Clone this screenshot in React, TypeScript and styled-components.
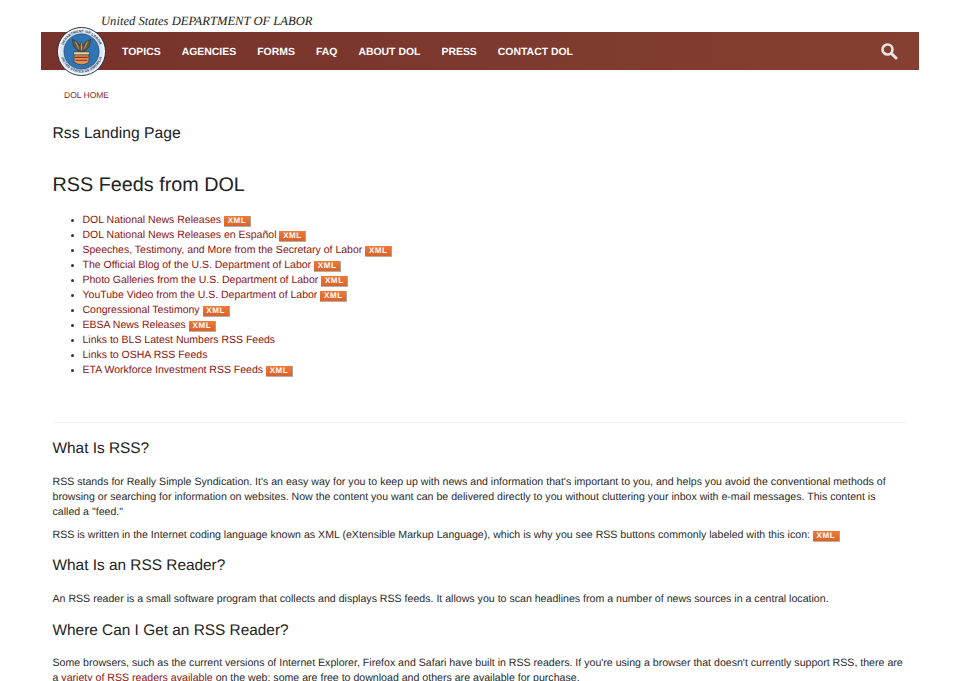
import React from "react";
import styled, { createGlobalStyle } from "styled-components";

const Global = createGlobalStyle`
  html, body { margin: 0; padding: 0; background: #fff; overflow: hidden; height: 681px; }
  body {
    font-family: "Liberation Sans", Arial, sans-serif;
    color: #2a2a2a;
    font-size: 10.6px;
    text-rendering: geometricPrecision;
  }
`;
const Page = styled.div`
  width: 878px;
  margin: 0 0 0 41px;
  height: 681px;
  overflow: hidden;
`;
const Header = styled.header`position: relative; padding-top: 14px;`;
const Agency = styled.div`
  font-family: "Liberation Serif", serif;
  font-style: italic;
  font-size: 12.6px;
  line-height: 14px;
  height: 18px;
  padding-left: 60px;
  color: #222;
`;
const Bar = styled.nav`
  height: 38px;
  background: linear-gradient(90deg, #77322b, #854031);
  display: flex;
  align-items: center;
  padding: 0 21px 0 81px;
`;
const Seal = styled.svg`position: absolute; left: 15.5px; top: 26.5px;`;
const NavItem = styled.a`
  color: #fff;
  font-weight: 700;
  font-size: 10.45px;
  margin-right: 21px;
  padding-top: 2px;
  white-space: nowrap;
`;
const Search = styled.svg`margin-left: auto;`;
const Crumb = styled.div`
  color: #7a2a22;
  font-size: 8.5px;
  padding: 20px 0 0 23px;
  line-height: 10px;
`;
const Main = styled.main`padding: 0 12px 0 11.5px;`;
const PageTitle = styled.h1`
  font-weight: 400;
  font-size: 15.7px;
  line-height: 18px;
  margin: 25px 0 0;
  color: #222;
`;
const H2 = styled.h2`
  font-weight: 400;
  font-size: 19.8px;
  line-height: 22px;
  margin: 31px 0 0;
  color: #222;
`;
const Feeds = styled.ul`
  margin: 17px 0 0;
  padding: 0 0 0 30px;
  list-style: disc;
  li { line-height: 15px; height: 15px; font-size: 10.5px; }
  li::marker { font-size: 9px; color: #333; }
`;
const Link = styled.a`color: #8b1410;`;
const Xml = styled.span<{ $gap: number }>`
  display: inline-block;
  vertical-align: baseline;
  margin-left: ${p => p.$gap}px;
  width: 27px;
  height: 11px;
  background: linear-gradient(180deg, #ee7a38, #d9622a);
  border-right: 1px solid #a9a49a;
  border-bottom: 1px solid #b5b0a6;
  box-sizing: border-box;
  color: #fff;
  font-weight: 700;
  font-size: 8px;
  line-height: 10px;
  letter-spacing: 0.6px;
  text-align: center;
`;
const Rule = styled.hr`
  border: 0;
  border-top: 1px solid #f0f0f0;
  margin: 44px 0 0;
`;
const H3 = styled.h3<{ $top: number }>`
  font-weight: 400;
  font-size: 15.4px;
  line-height: 18px;
  margin: ${p => p.$top}px 0 0;
  color: #222;
`;
const Para = styled.p<{ $top: number }>`
  width: 853px;
  margin: ${p => p.$top}px 0 0;
  line-height: 15px;
  font-size: 10.6px;
  color: #2a2a2a;
`;
const SealText = styled.text`
  font-size: 3.6px;
  font-weight: 700;
  fill: #1c3a66;
  letter-spacing: 0.15px;
`;

const items: [string, boolean][] = [
  ["DOL National News Releases", true],
  ["DOL National News Releases en Español", true],
  ["Speeches, Testimony, and More from the Secretary of Labor", true],
  ["The Official Blog of the U.S. Department of Labor", true],
  ["Photo Galleries from the U.S. Department of Labor", true],
  ["YouTube Video from the U.S. Department of Labor", true],
  ["Congressional Testimony", true],
  ["EBSA News Releases", true],
  ["Links to BLS Latest Numbers RSS Feeds", false],
  ["Links to OSHA RSS Feeds", false],
  ["ETA Workforce Investment RSS Feeds", true],
];
const nav = ["TOPICS", "AGENCIES", "FORMS", "FAQ", "ABOUT DOL", "PRESS", "CONTACT DOL"];

export default function App() {
  return (
    <Page>
      <Global />
      <Header>
        <Agency>United States DEPARTMENT OF LABOR</Agency>
        <Bar>
          {nav.map(n => <NavItem key={n}>{n}</NavItem>)}
          <Search width="18" height="18" viewBox="0 0 18 18" fill="none" stroke="#e4e4df">
            <circle cx="7.5" cy="7.5" r="5" strokeWidth="2.6" />
            <path d="M11.5 11.5 L16 16" strokeWidth="3" strokeLinecap="round" />
          </Search>
        </Bar>
        <Seal width="49" height="49" viewBox="0 0 50 50">
          <defs>
            <path id="ring-top" d="M5.5 25 A19.5 19.5 0 0 1 44.5 25" />
            <path id="ring-bottom" d="M3.5 25 A21.5 21.5 0 0 0 46.5 25" />
          </defs>
          <circle cx="25" cy="25" r="24.5" fill="#fff" stroke="#1c2c40" strokeWidth="1" />
          <circle cx="25" cy="25" r="22.6" fill="#dfe6ee" />
          <SealText><textPath href="#ring-top" startOffset="50%" textAnchor="middle">DEPARTMENT OF LABOR</textPath></SealText>
          <SealText><textPath href="#ring-bottom" startOffset="50%" textAnchor="middle">UNITED STATES OF AMERICA</textPath></SealText>
          <circle cx="25" cy="25" r="18" fill="#2f74b4" stroke="#16386a" strokeWidth="0.6" />
          <path d="M15.5 12.5 L21 15.5 L23 19 L25 15 L27 19 L29 15.5 L34.5 12.5 L33 20 L28.5 24.5 L21.5 24.5 L17 20 Z" fill="#6a5638" stroke="#2e2a20" strokeWidth="0.5" />
          <path d="M19 15 L22 22 M31 15 L28 22 M25 16 V24" stroke="#c9b98e" strokeWidth="0.8" />
          <path d="M17 25.5 H33 V28.5 H17 Z" fill="#ecd6a6" stroke="#222" strokeWidth="0.5" />
          <path d="M17.5 28.5 H32.5 V36 Q25 41 17.5 36 Z" fill="#e09156" stroke="#222" strokeWidth="0.5" />
          <path d="M18.5 31 H31.5 M19 34 H31" stroke="#8a2f22" strokeWidth="1.1" />
        </Seal>
        <Crumb>DOL HOME</Crumb>
      </Header>
      <Main>
        <PageTitle>Rss Landing Page</PageTitle>
        <H2>RSS Feeds from DOL</H2>
        <Feeds>
          {items.map(([t, x]) => (
            <li key={t}><Link>{t}</Link>{x && <Xml $gap={3}>XML</Xml>}</li>
          ))}
        </Feeds>
        <Rule />
        <H3 $top={17}>What Is RSS?</H3>
        <Para $top={17}>RSS stands for Really Simple Syndication. It's an easy way for you to keep up with news and information that's important to you, and helps you avoid the conventional methods of browsing or searching for information on websites. Now the content you want can be delivered directly to you without cluttering your inbox with e-mail messages. This content is called a "feed."</Para>
        <Para $top={8}>RSS is written in the Internet coding language known as XML (eXtensible Markup Language), which is why you see RSS buttons commonly labeled with this icon: <Xml $gap={0}>XML</Xml></Para>
        <H3 $top={14}>What Is an RSS Reader?</H3>
        <Para $top={17}>An RSS reader is a small software program that collects and displays RSS feeds. It allows you to scan headlines from a number of news sources in a central location.</Para>
        <H3 $top={15}>Where Can I Get an RSS Reader?</H3>
        <Para $top={16}>Some browsers, such as the current versions of Internet Explorer, Firefox and Safari have built in RSS readers. If you're using a browser that doesn't currently support RSS, there are a <Link>variety of RSS readers available</Link> on the web; some are free to download and others are available for purchase.</Para>
      </Main>
    </Page>
  );
}
